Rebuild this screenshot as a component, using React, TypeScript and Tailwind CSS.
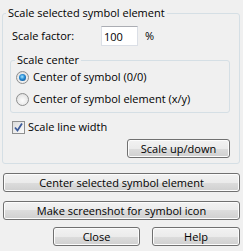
import React from 'react';

const btn =
  'flex items-center justify-center h-[19px] border border-[#707070] rounded-[3px] bg-[linear-gradient(#f2f2f2_0%,#ebebeb_50%,#dddddd_50%,#cfcfcf_100%)] shadow-[inset_0_0_0_1px_#fcfcfc] text-black leading-[14px]';

const Radio: React.FC<{ checked?: boolean; label: string }> = ({ checked, label }) => (
  <div className="flex items-center h-[20px] pl-[5px]">
    <div className="flex items-center justify-center w-[13px] h-[13px] rounded-full border border-[#8e8f8f] bg-[radial-gradient(circle_at_50%_60%,#fdfdfd,#e8e8e8_60%,#cfcfcf)]">
      {checked && (
        <div className="w-[7px] h-[7px] rounded-full bg-[radial-gradient(circle_at_45%_40%,#a6e6ff,#2388d2_45%,#0b3f7b)]" />
      )}
    </div>
    <span className="ml-[4px] leading-[14px]">{label}</span>
  </div>
);

const App: React.FC = () => {
  return (
    <div className="w-[243px] h-[251px] overflow-hidden bg-[#f0f0f0] pt-[6px] pl-[2px] text-[11px] text-black font-['Segoe_UI','Open_Sans',sans-serif]">
      <fieldset className="w-[238px] border border-[#d5dfe5] rounded-[3px] pb-[5px]">
        <legend className="ml-[3px] px-[2px] leading-[14px]">Scale selected symbol element</legend>

        {/* scale factor */}
        <div className="flex items-center mt-[6px] pl-[9px] h-[20px]">
          <span className="w-[89px] leading-[14px]">Scale factor:</span>
          <input
            readOnly
            value="100"
            className="w-[37px] h-[20px] bg-white border border-[#dbdfe6] border-t-[#abadb3] pl-[2px] text-[11px] outline-none"
          />
          <span className="ml-[7px]">%</span>
        </div>

        {/* scale center */}
        <fieldset className="mt-[7px] ml-[7px] w-[220px] border border-[#d5dfe5] rounded-[3px] pb-[3px]">
          <legend className="ml-[4px] px-[2px] leading-[14px]">Scale center</legend>
          <Radio checked label="Center of symbol (0/0)" />
          <div className="mt-[2px]">
            <Radio label="Center of symbol element (x/y)" />
          </div>
        </fieldset>

        <div className="flex items-center mt-[6px] h-[16px] pl-[9px]">
          <div className="w-[13px] h-[13px] border border-[#8e8f8f] bg-[linear-gradient(135deg,#dcdcdc,#fbfbfb)] flex items-center justify-center">
            <svg width="11" height="11" viewBox="0 0 11 11">
              <path d="M2 5.5 L4.5 8.5 L9 1.5" fill="none" stroke="#3c5b9a" strokeWidth="1.8" />
            </svg>
          </div>
          <span className="ml-[3px] leading-[14px]">Scale line width</span>
        </div>

        <div className="flex justify-end mt-[4px] pr-[9px]">
          <button className={`${btn} w-[103px]`}>Scale up/down</button>
        </div>
      </fieldset>

      <button className={`${btn} mt-[9px] ml-[1px] w-[237px]`}>Center selected symbol element</button>
      <button className={`${btn} mt-[9px] ml-[1px] w-[237px]`}>Make screenshot for symbol icon</button>

      <div className="flex mt-[7px]">
        <button className={`${btn} ml-[51px] w-[87px]`}>Close</button>
        <button className={`${btn} ml-[12px] w-[88px]`}>Help</button>
      </div>
    </div>
  );
};

export default App;
